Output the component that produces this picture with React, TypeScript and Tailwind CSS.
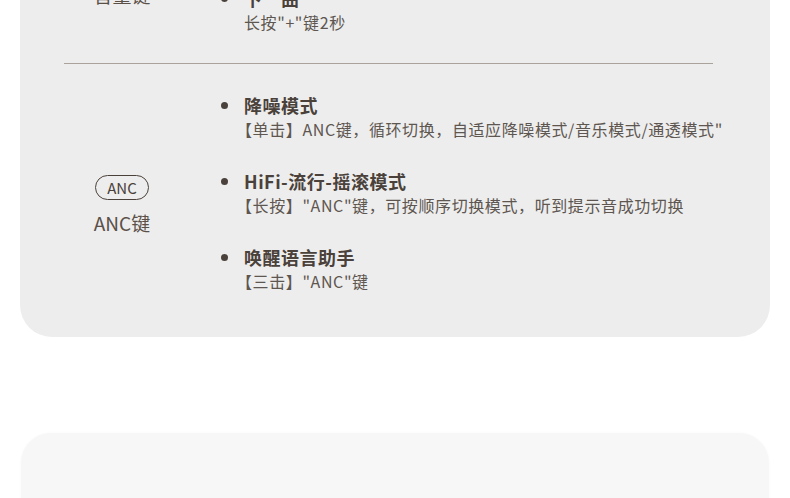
const font = { fontFamily: '"Noto Sans CJK SC", "Noto Sans", sans-serif' };

type Item = { title: string; desc: string };

const topItems: Item[] = [{ title: "下一曲", desc: "长按\"+\"键2秒" }];

const ancItems: Item[] = [
  { title: "降噪模式", desc: "【单击】ANC键，循环切换，自适应降噪模式/音乐模式/通透模式\"" },
  { title: "HiFi-流行-摇滚模式", desc: "【长按】\"ANC\"键，可按顺序切换模式，听到提示音成功切换" },
  { title: "唤醒语言助手", desc: "【三击】\"ANC\"键" },
];

function ItemList({ items }: { items: Item[] }) {
  return (
    <div className="flex flex-col gap-[28px]">
      {items.map((it) => (
        <div key={it.title} className="flex">
          <div className="w-[24px] h-[24px] flex items-center">
            <span className="block w-[7px] h-[7px] rounded-full bg-[#4a413a] ml-[1px]" />
          </div>
          <div>
            <div className="text-[18px] leading-[24px] font-bold text-[#4a413a] tracking-[0.5px]">
              {it.title}
            </div>
            <div
              className={`text-[16px] leading-[24px] text-[#5e5650] tracking-[0.6px] whitespace-nowrap ${
                it.desc.startsWith("【") ? "-ml-[8px]" : ""
              }`}
            >
              {it.desc}
            </div>
          </div>
        </div>
      ))}
    </div>
  );
}

export default function App() {
  return (
    <div className="w-[790px] h-[498px] overflow-hidden bg-white" style={font}>
      <div className="mx-[20px] -mt-[14px] bg-[#ededed] rounded-b-[32px]">
        {/* 音量键 section, cut at the top */}
        <div className="flex pb-[29px]">
          <div className="w-[204px] flex justify-center -mt-[3px]">
            <span className="text-[19px] leading-[24px] text-[#5a5048]">音量键</span>
          </div>
          <div className="-ml-[4px]">
            <ItemList items={topItems} />
          </div>
        </div>

        <div className="ml-[44px] w-[649px] h-px bg-[#aaa39c]" />

        {/* ANC section */}
        <div className="flex items-center pt-[29px] pb-[44px]">
          <div className="w-[204px] flex flex-col items-center pt-[24px]">
            <div className="h-[25px] px-[11px] rounded-full border border-[#4a413a] flex items-center text-[15px] leading-none text-[#4a413a]">
              ANC
            </div>
            <div className="mt-[11px] text-[19px] leading-[24px] text-[#5a5048]">ANC键</div>
          </div>
          <div className="-ml-[4px]">
            <ItemList items={ancItems} />
          </div>
        </div>
      </div>

      <div className="mt-[96px] mx-[21px] h-[120px] bg-[#f7f7f7] rounded-t-[30px] shadow-[0_0_3px_rgba(0,0,0,0.03)]" />
    </div>
  );
}
